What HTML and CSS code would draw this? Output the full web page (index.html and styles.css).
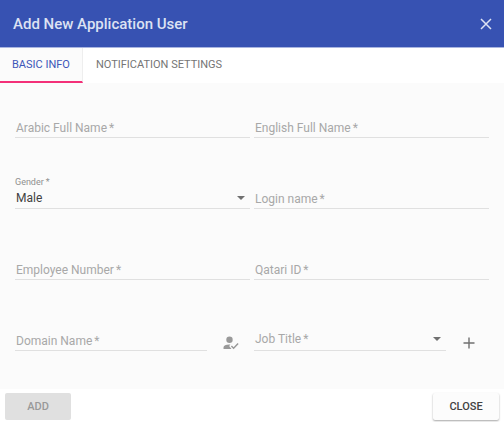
FILE: index.html
```html
<!DOCTYPE html>
<html lang="en">
<head>
<meta charset="utf-8">
<meta name="viewport" content="width=device-width, initial-scale=1">
<title>Add New Application User</title>
<link rel="stylesheet" href="styles.css">
</head>
<body>
<form class="dialog">
  <header class="toolbar">
    <h1 class="title">Add New Application User</h1>
    <button type="button" class="icon-button dismiss" aria-label="Close dialog">
      <svg width="12" height="12" viewBox="0 0 12 12"><path d="M1 1L11 11M11 1L1 11" fill="none" stroke="currentColor" stroke-width="1.5"/></svg>
    </button>
  </header>
  <nav class="tabs" role="tablist">
    <button type="button" class="tab active" role="tab" aria-selected="true">BASIC INFO</button>
    <button type="button" class="tab" role="tab" aria-selected="false">NOTIFICATION SETTINGS</button>
  </nav>
  <main class="fields">
    <div class="field">
      <label for="arabic">Arabic Full Name<span class="star">*</span></label>
      <input id="arabic" type="text">
    </div>
    <div class="field">
      <label for="english">English Full Name<span class="star">*</span></label>
      <input id="english" type="text">
    </div>
    <div class="field floated">
      <label for="gender">Gender<span class="star">*</span></label>
      <select id="gender"><option>Male</option><option>Female</option></select>
      <svg class="arrow" width="8" height="4" viewBox="0 0 8 4"><path d="M0 0H8L4 4Z" fill="currentColor"/></svg>
    </div>
    <div class="field">
      <label for="login">Login name<span class="star">*</span></label>
      <input id="login" type="text">
    </div>
    <div class="field">
      <label for="employee">Employee Number<span class="star">*</span></label>
      <input id="employee" type="text">
    </div>
    <div class="field">
      <label for="qatari">Qatari ID<span class="star">*</span></label>
      <input id="qatari" type="text">
    </div>
    <div class="with-action">
      <div class="field">
        <label for="domain">Domain Name<span class="star">*</span></label>
        <input id="domain" type="text">
      </div>
      <button type="button" class="icon-button check-user" aria-label="Check user">
        <svg width="16" height="14" viewBox="0 0 16 14"><g fill="currentColor"><circle cx="6.5" cy="3.7" r="3.2"/><path d="M0.5 13V11.4C0.5 9.2 3.2 8.2 7.4 8.4L6.2 10L8.4 13Z"/></g><path d="M8.4 10L10.6 12.2L15.1 7.6" fill="none" stroke="currentColor" stroke-width="1.5"/></svg>
      </button>
    </div>
    <div class="with-action">
      <div class="field dropdown">
        <label for="job">Job Title<span class="star">*</span></label>
        <select id="job"><option></option></select>
        <svg class="arrow" width="8" height="4" viewBox="0 0 8 4"><path d="M0 0H8L4 4Z" fill="currentColor"/></svg>
      </div>
      <button type="button" class="icon-button add-title" aria-label="Add job title">
        <svg width="12" height="12" viewBox="0 0 12 12"><path d="M6 0.5V11.5M0.5 6H11.5" fill="none" stroke="currentColor" stroke-width="1.4"/></svg>
      </button>
    </div>
  </main>
  <footer class="actions">
    <button type="submit" class="button" disabled>ADD</button>
    <button type="button" class="button">CLOSE</button>
  </footer>
</form>
</body>
</html>
```
FILE: styles.css
```css
* {
  box-sizing: border-box;
}

body {
  margin: 0;
  background: #fff;
  color: #424242;
  font-family: Roboto, sans-serif;
  font-size: 12px;
}

button,
input,
select {
  margin: 0;
  border: 0;
  background: none;
  color: inherit;
  font: inherit;
}

svg {
  display: block;
}

.toolbar {
  display: flex;
  align-items: center;
  justify-content: space-between;
  height: 48px;
  padding: 0 8px 0 13px;
  border-bottom: 1px solid #a9b5e0;
  background: #3752b2;
  color: #dde2f3;
}

.title {
  margin: 0;
  font-size: 15px;
  font-weight: 500;
}

.icon-button {
  display: grid;
  place-items: center;
  flex: none;
  width: 20px;
  height: 16px;
  padding: 0;
}

.tabs {
  display: flex;
  height: 35px;
}

.tab {
  padding: 0 13px;
  border-bottom: 2px solid transparent;
  color: #757575;
  font-size: 11px;
}

.tab.active {
  padding: 0 12px;
  border-right: 1px solid #eee;
  border-bottom-color: #f33078;
  background: #fbfbfb;
  color: #3d56b8;
}

.fields {
  display: grid;
  grid-template-columns: 1fr 1fr;
  gap: 32px 4px;
  padding: 16px 15px 38px;
  background: #fbfbfb;
}

.field {
  display: grid;
  grid-template-rows: 18px 21px;
  flex: 1;
  min-width: 0;
}

.field label {
  grid-area: 2 / 1;
  z-index: 1;
  align-self: end;
  padding-left: 1px;
  color: #a8a8a8;
  line-height: 19px;
  pointer-events: none;
}

.field.floated label {
  grid-area: 1 / 1;
  padding-left: 0;
  color: #909090;
  font-size: 9px;
  line-height: 12px;
}

.star {
  margin-left: 2px;
}

.field input,
.field select {
  grid-area: 2 / 1;
  width: 100%;
  min-width: 0;
  padding: 0 1px;
  border-bottom: 1px solid #e0e0e0;
  border-radius: 0;
  appearance: none;
  outline: none;
}

.field.dropdown label {
  padding-bottom: 2px;
}

.arrow {
  grid-area: 2 / 1;
  place-self: center end;
  margin-right: 5px;
  color: #707070;
  pointer-events: none;
}

.floated .arrow {
  margin-bottom: 2px;
}

.dropdown .arrow {
  margin-bottom: 4px;
}

.with-action {
  display: flex;
  align-items: flex-end;
}

.check-user {
  margin: 0 9px 0 14px;
  color: #999;
}

.add-title {
  margin: 0 10px 0 13px;
  color: #707070;
}

.actions {
  display: flex;
  justify-content: space-between;
  padding: 4px 5px 2px;
}

.button {
  width: 66px;
  height: 27px;
  padding: 0;
  border-radius: 2px;
  background: #fcfcfc;
  box-shadow: 0 1px 2px rgb(0 0 0 / 35%);
  font-size: 11px;
  font-weight: 500;
}

.button:disabled {
  background: #e0e0e0;
  box-shadow: none;
  color: #999;
}
```
